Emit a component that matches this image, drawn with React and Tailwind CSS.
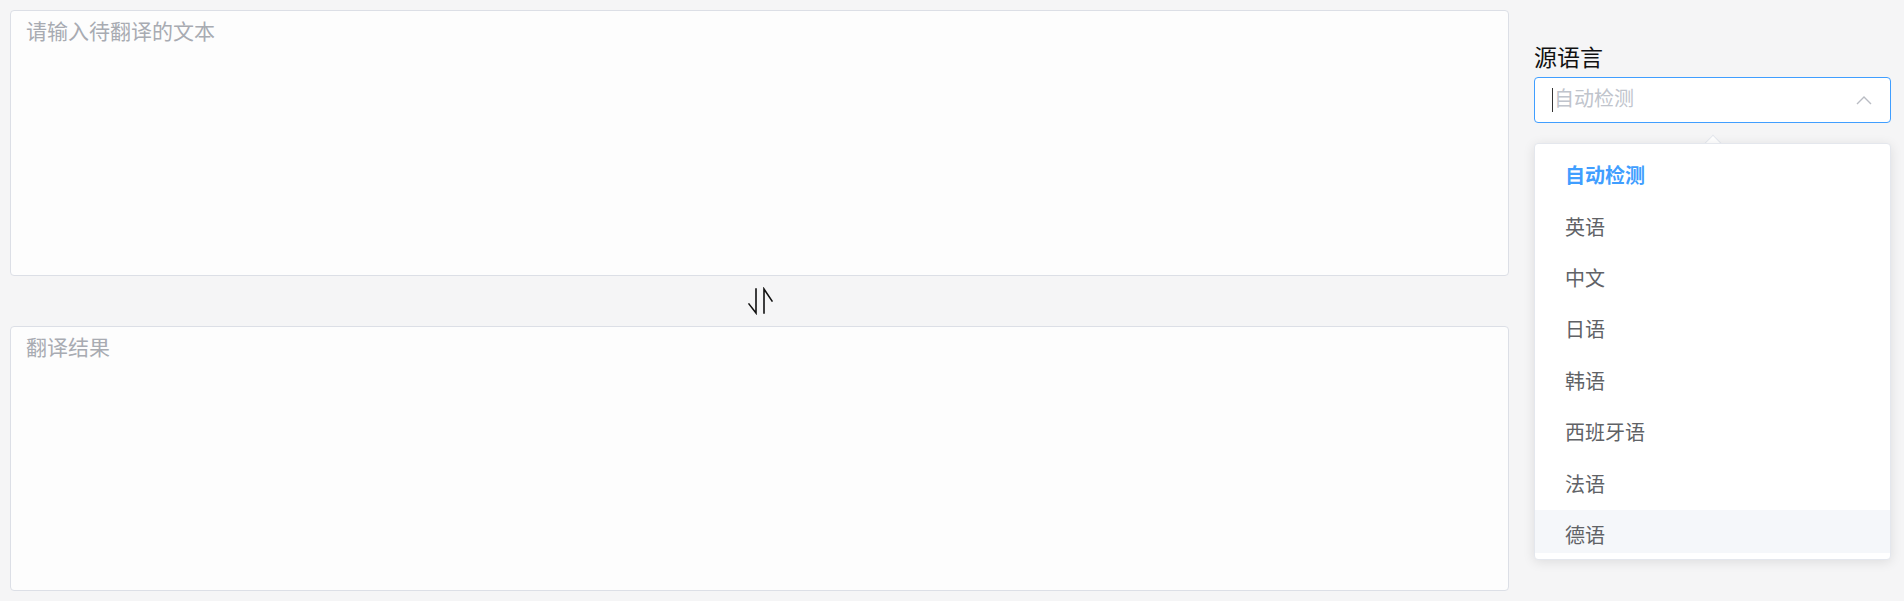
import React from "react";

const FONT = { fontFamily: '"Noto Sans CJK SC", "Noto Sans", sans-serif' };

const items = ["自动检测", "英语", "中文", "日语", "韩语", "西班牙语", "法语", "德语"];

function SwapIcon() {
  return (
    <svg width="30" height="28" viewBox="0 0 30 28" fill="none" stroke="#111" strokeWidth="1.6" strokeLinecap="square">
      <path d="M11 2 V26 L4 17" />
      <path d="M19 26 V2 L27 14" />
    </svg>
  );
}

function ChevronUp() {
  return (
    <svg width="16" height="10" viewBox="0 0 16 10" fill="none" stroke="#b9bcc3" strokeWidth="1.4">
      <path d="M1 9 L8 2 L15 9" />
    </svg>
  );
}

export default function App() {
  return (
    <div
      className="w-[1904px] h-[601px] flex p-[10px] pr-[13px] gap-[25px] bg-[#f5f5f6] overflow-hidden"
      style={FONT}
    >
      <div className="flex-1 flex flex-col">
        <textarea
          className="h-[266px] w-full resize-none rounded-[4px] border border-[#dcdfe6] bg-[#fdfdfd] px-[15px] pt-[4px] pb-[5px] text-[21px] leading-[31px] text-[#606266] placeholder:text-[#a8abb2] outline-none"
          placeholder="请输入待翻译的文本"
          style={FONT}
        />
        <div className="h-[50px] flex items-center justify-center">
          <SwapIcon />
        </div>
        <textarea
          className="h-[265px] w-full resize-none rounded-[4px] border border-[#dcdfe6] bg-[#fdfdfd] px-[15px] pt-[4px] pb-[5px] text-[21px] leading-[31px] text-[#606266] placeholder:text-[#a8abb2] outline-none"
          placeholder="翻译结果"
          style={FONT}
        />
      </div>

      <div className="w-[357px] flex flex-col">
        <div className="mt-[28px] h-[39px] text-[23px] leading-[36px] text-[#111]">源语言</div>
        <div className="relative">
          <div className="h-[46px] rounded-[4px] border border-[#409eff] bg-white flex items-center pl-[17px] pr-[18px]">
            <span className="w-px h-[24px] bg-[#333] mr-[1px]" />
            <span className="flex-1 text-[20px] text-[#c0c4cc] pb-[5px]">自动检测</span>
            <ChevronUp />
          </div>

          <div className="absolute left-0 right-0 top-[66px] z-10">
            <div className="absolute left-1/2 -top-[6px] -ml-[6px] w-[12px] h-[12px] rotate-45 bg-white border-l border-t border-[#e4e7ed]" />
            <div className="relative rounded-[4px] border border-[#e4e7ed] bg-white shadow-[0_2px_12px_rgba(0,0,0,0.1)] pt-[6px] pb-[6px]">
              <div className="h-[403px] overflow-hidden">
                {items.map((t, i) => (
                  <div
                    key={t}
                    className={
                      "h-[51.4px] flex items-center pl-[30px] pb-[1px] text-[20px] " +
                      (i === 0
                        ? "text-[#409eff] font-bold"
                        : i === items.length - 1
                        ? "text-[#606266] bg-[#f5f7fa]"
                        : "text-[#606266]")
                    }
                  >
                    {t}
                  </div>
                ))}
              </div>
            </div>
          </div>
        </div>
      </div>
    </div>
  );
}
